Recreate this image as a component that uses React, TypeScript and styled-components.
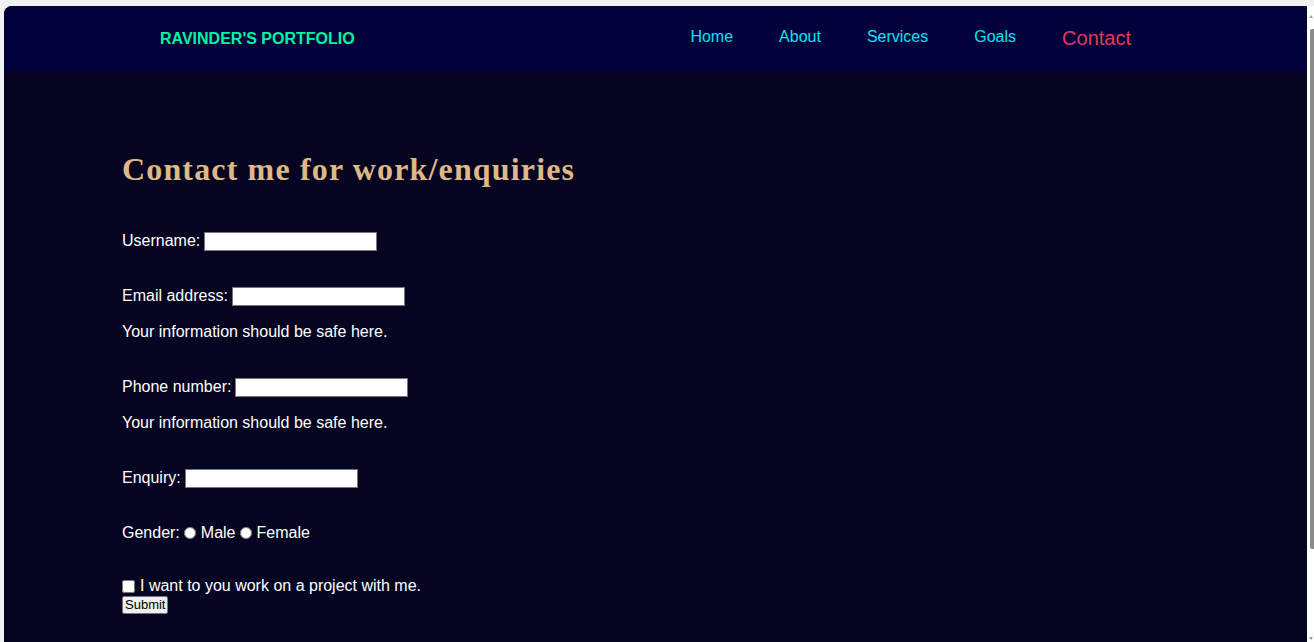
import React from "react";
import styled, { createGlobalStyle } from "styled-components";

const Global = createGlobalStyle`
  html, body { margin: 0; padding: 0; }
  body {
    background: #f1f1f1;
    font-family: "Liberation Sans", Arial, sans-serif;
    overflow: hidden;
  }
`;

const Frame = styled.div`
  display: flex;
  height: 642px;
  padding-top: 6px;
  padding-left: 4px;
  box-sizing: border-box;
`;

const Page = styled.div`
  flex: 1;
  display: flex;
  flex-direction: column;
  background: #050521;
  border-top-left-radius: 8px;
  overflow: hidden;
`;

const ScrollTrack = styled.div`
  width: 7px;
  background: #ffffff;
  position: relative;
`;

const ScrollArrow = styled.div<{ $bottom?: boolean }>`
  position: absolute;
  left: 2px;
  ${(p) => (p.$bottom ? "bottom: 2px;" : "top: 9px;")}
  width: 0;
  height: 0;
  border-left: 2.5px solid transparent;
  border-right: 2.5px solid transparent;
  ${(p) =>
    p.$bottom
      ? "border-top: 3px solid #a0a0a0;"
      : "border-bottom: 3px solid #a0a0a0;"}
`;

const ScrollThumb = styled.div`
  position: absolute;
  left: 3px;
  top: 23px;
  width: 4px;
  height: 520px;
  background: #8b8b8b;
  border-radius: 2px 0 0 2px;
`;

const Header = styled.header`
  height: 65px;
  background: #01013b;
  display: flex;
  align-items: center;
  padding-left: 156px;
  padding-right: 176px;
`;

const Brand = styled.div`
  color: #00f5a0;
  font-weight: bold;
  font-size: 16px;
  padding-top: 1px;
`;

const Nav = styled.nav`
  margin-left: auto;
  display: flex;
  align-items: center;
  gap: 46px;
`;

const NavLink = styled.a<{ $active?: boolean }>`
  color: ${(p) => (p.$active ? "#e8375a" : "#00e5f0")};
  font-size: ${(p) => (p.$active ? "20px" : "16px")};
  text-decoration: none;
  padding-bottom: ${(p) => (p.$active ? "0" : "4px")};
`;

const Main = styled.main`
  flex: 1;
  padding-left: 118px;
  padding-top: 80px;
  color: #ffffff;
  font-size: 16px;
`;

const Heading = styled.h1`
  margin: 0 0 44px;
  font-family: "Liberation Serif", "Times New Roman", serif;
  font-weight: bold;
  font-size: 32px;
  line-height: 36px;
  letter-spacing: 1.15px;
  color: #deb887;
`;

const Form = styled.form`
  display: flex;
  flex-direction: column;
  align-items: flex-start;
`;

const Row = styled.div<{ $mt?: number }>`
  display: flex;
  align-items: center;
  height: 20px;
  line-height: 20px;
  margin-top: ${(p) => p.$mt ?? 0}px;
  white-space: pre;
`;

const TextInput = styled.input`
  width: 173px;
  height: 19px;
  box-sizing: border-box;
  margin: 0 0 0 4px;
  padding: 1px 2px;
  border: 1px solid #767676;
  background: #ffffff;
  font-size: 13px;
`;

const Radio = styled.input`
  width: 12px;
  height: 12px;
  margin: 0 5px 0 4px;
`;

const Check = styled.input`
  width: 13px;
  height: 13px;
  margin: 0 5px 0 0;
`;

const Submit = styled.button`
  margin-top: 0;
  height: 18px;
  padding: 0 2px;
  font-family: "Liberation Sans", Arial, sans-serif;
  font-size: 13px;
  color: #000000;
  background: #efefef;
  border: 1px solid #767676;
  border-radius: 2px;
  line-height: 14px;
`;

export default function App() {
  return (
    <>
      <Global />
      <Frame>
        <Page>
          <Header>
            <Brand>RAVINDER'S PORTFOLIO</Brand>
            <Nav>
              <NavLink href="#">Home</NavLink>
              <NavLink href="#">About</NavLink>
              <NavLink href="#">Services</NavLink>
              <NavLink href="#">Goals</NavLink>
              <NavLink href="#" $active>
                Contact
              </NavLink>
            </Nav>
          </Header>
          <Main>
            <Heading>Contact me for work/enquiries</Heading>
            <Form onSubmit={(e) => e.preventDefault()}>
              <Row>
                Username:
                <TextInput type="text" />
              </Row>
              <Row $mt={35}>
                Email address:
                <TextInput type="email" />
              </Row>
              <Row $mt={16}>Your information should be safe here.</Row>
              <Row $mt={35}>
                Phone number:
                <TextInput type="tel" />
              </Row>
              <Row $mt={16}>Your information should be safe here.</Row>
              <Row $mt={35}>
                Enquiry:
                <TextInput type="text" />
              </Row>
              <Row $mt={35}>
                Gender:
                <Radio type="radio" name="gender" />
                Male
                <Radio type="radio" name="gender" />
                Female
              </Row>
              <Row $mt={33}>
                <Check type="checkbox" />
                I want to you work on a project with me.
              </Row>
              <Submit type="submit">Submit</Submit>
            </Form>
          </Main>
        </Page>
        <ScrollTrack>
          <ScrollArrow />
          <ScrollThumb />
          <ScrollArrow $bottom />
        </ScrollTrack>
      </Frame>
    </>
  );
}
